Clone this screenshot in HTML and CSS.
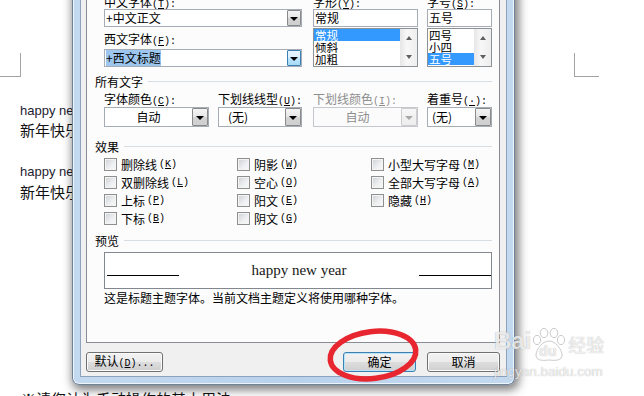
FILE: index.html
```html
<!DOCTYPE html>
<html lang="zh-CN">
<head>
<meta charset="utf-8">
<title>字体</title>
<link rel="stylesheet" href="styles.css">
</head>
<body>
<div class="doc">
  <div class="doc-left">
    <div class="corner corner-l"></div>
    <p class="en en-1">happy new year</p>
    <p class="zh zh-1">新年快乐</p>
    <p class="en en-2">happy new year</p>
    <p class="zh zh-2">新年快乐</p>
  </div>
  <div class="doc-right">
    <div class="corner corner-r"></div>
  </div>
</div>
<p class="doc-bottom">※请您认为手动操作的基本用法</p>

<div class="dialog">
  <div class="client">
    <div class="panel">
      <div class="top">
        <div class="col-a">
          <div class="lbl lbl-top">中文字体<span class="mn">(<u>T</u>):</span></div>
          <div class="combo"><span class="val">+中文正文</span><span class="dd"></span></div>
          <div class="lbl lbl-2">西文字体<span class="mn">(<u>F</u>):</span></div>
          <div class="combo"><span class="val"><span class="sel">+西文标题</span></span><span class="dd dd-hot"></span></div>
        </div>
        <div class="col-b">
          <div class="lbl lbl-top">字形<span class="mn">(<u>Y</u>):</span></div>
          <div class="field">常规</div>
          <div class="list">
            <div class="items">
              <div class="item on">常规</div>
              <div class="item">倾斜</div>
              <div class="item">加粗</div>
            </div>
            <div class="sb"><span class="sb-btn"><i class="up"></i></span><span class="sb-btn"><i class="dn"></i></span></div>
          </div>
        </div>
        <div class="col-c">
          <div class="lbl lbl-top">字号<span class="mn">(<u>S</u>):</span></div>
          <div class="field">五号</div>
          <div class="list">
            <div class="items">
              <div class="item">四号</div>
              <div class="item">小四</div>
              <div class="item on">五号</div>
            </div>
            <div class="sb"><span class="sb-btn"><i class="up"></i></span><span class="sb-btn"><i class="dn"></i></span></div>
          </div>
        </div>
      </div>

      <div class="sec sec-all">所有文字</div>
      <div class="row2 row2-lbl">
        <div class="c1">字体颜色<span class="mn">(<u>C</u>):</span></div>
        <div class="c2">下划线线型<span class="mn">(<u>U</u>):</span></div>
        <div class="c3 dis">下划线颜色<span class="mn">(<u>I</u>):</span></div>
        <div class="c4">着重号<span class="mn">(<u>·</u>):</span></div>
      </div>
      <div class="row2 row2-cb">
        <div class="c1 combo combo2"><span class="val center">自动</span><span class="dd"></span></div>
        <div class="c2 combo combo2"><span class="val pad9">(无)</span><span class="dd"></span></div>
        <div class="c3 combo combo2 combo-dis"><span class="val center">自动</span><span class="dd"></span></div>
        <div class="c4 combo combo2"><span class="val pad4">(无)</span><span class="dd"></span></div>
      </div>

      <div class="sec sec-fx">效果</div>
      <div class="checks">
        <label class="chk"><span class="box"></span>删除线<span class="mn">(<u>K</u>)</span></label>
        <label class="chk"><span class="box"></span>双删除线<span class="mn">(<u>L</u>)</span></label>
        <label class="chk"><span class="box"></span>上标<span class="mn">(<u>P</u>)</span></label>
        <label class="chk"><span class="box"></span>下标<span class="mn">(<u>B</u>)</span></label>
        <label class="chk"><span class="box"></span>阴影<span class="mn">(<u>W</u>)</span></label>
        <label class="chk"><span class="box"></span>空心<span class="mn">(<u>O</u>)</span></label>
        <label class="chk"><span class="box"></span>阳文<span class="mn">(<u>E</u>)</span></label>
        <label class="chk"><span class="box"></span>阴文<span class="mn">(<u>G</u>)</span></label>
        <label class="chk"><span class="box"></span>小型大写字母<span class="mn">(<u>M</u>)</span></label>
        <label class="chk"><span class="box"></span>全部大写字母<span class="mn">(<u>A</u>)</span></label>
        <label class="chk"><span class="box"></span>隐藏<span class="mn">(<u>H</u>)</span></label>
      </div>

      <div class="sec sec-pv">预览</div>
      <div class="preview">
        <span class="pv-line"></span>
        <span class="pv-text">happy new year</span>
        <span class="pv-line"></span>
      </div>
      <p class="desc">这是标题主题字体。当前文档主题定义将使用哪种字体。</p>
    </div>
    <div class="btns">
      <button class="btn btn-def">默认<span class="mn">(<u>D</u>)...</span></button>
      <button class="btn btn-ok">确定</button>
      <button class="btn btn-cancel">取消</button>
    </div>
  </div>
</div>

<svg class="mark" width="104" height="62" viewBox="0 0 104 62">
  <ellipse cx="51" cy="31" rx="43" ry="23.5" transform="rotate(-7 51 31)" fill="none" stroke="#e8262f" stroke-width="5.5"/>
</svg>

<div class="wm">
  <div class="wm-logo">
    <span class="wm-bai">Bai</span>
    <span class="wm-paw">
      <svg width="34" height="34" viewBox="0 0 34 34">
        <g fill="rgba(255,255,255,0.8)" stroke="rgba(140,140,140,0.45)" stroke-width="1">
          <ellipse cx="5" cy="12" rx="3.6" ry="4.6"/>
          <ellipse cx="12" cy="5" rx="3.8" ry="4.6"/>
          <ellipse cx="22" cy="5" rx="3.8" ry="4.6"/>
          <ellipse cx="29" cy="12" rx="3.6" ry="4.6"/>
          <path d="M17 13 C10 13 4 22 4 27 C4 32 9 33 17 32 C25 33 30 32 30 27 C30 22 24 13 17 13 Z" fill="none"/>
        </g>
      </svg>
      <span class="wm-du">du</span>
    </span>
    <span class="wm-jy">经验</span>
  </div>
  <div class="wm-url">jingyan.baidu.com</div>
</div>
</body>
</html>
```

FILE: styles.css
```css
* { box-sizing: border-box; margin: 0; padding: 0; }

html, body {
  width: 644px;
  height: 396px;
  overflow: hidden;
  background: #fff;
}

body {
  position: relative;
  font-family: "Noto Sans CJK SC", "Liberation Sans", sans-serif;
  font-size: 12px;
  color: #000;
}

/* ---------- document behind the dialog ---------- */
.doc {
  display: flex;
  justify-content: space-between;
  height: 390px;
}

.doc-left { width: 120px; }
.doc-right { width: 70px; }

.corner {
  height: 24px;
  margin-top: 53px;
  border-bottom: 1px solid #a3a3a3;
}
.corner-l { width: 21px; border-right: 1px solid #a3a3a3; }
.corner-r { width: 25px; border-left: 1px solid #a3a3a3; }

.en {
  font-family: "Liberation Sans", Arial, sans-serif;
  font-size: 13px;
  line-height: 16px;
  color: #1c1c30;
  white-space: nowrap;
  padding-left: 20px;
}
.en-1 { margin-top: 26px; }
.en-2 { margin-top: 25px; }

.zh {
  font-size: 15px;
  line-height: 18px;
  color: #111;
  white-space: nowrap;
  padding-left: 20px;
}
.zh-1 { margin-top: 2px; }
.zh-2 { margin-top: 3px; }

.doc-bottom {
  font-size: 15px;
  line-height: 18px;
  color: #111;
  padding-left: 21px;
  white-space: nowrap;
}

/* ---------- dialog window ---------- */
.dialog {
  position: absolute;
  left: 72px;
  top: -20px;
  width: 443px;
  height: 405px;
  z-index: 2;
  background: linear-gradient(to right, #c3d9ef, #b9d2ec 50%, #c3d9ef);
  border: 1px solid #6f8299;
  border-top: 0;
  border-radius: 0 0 7px 7px;
  padding: 0 7px 7px;
  box-shadow: 2px 3px 10px 2px rgba(0, 0, 0, 0.5), inset 0 0 0 1px rgba(255, 255, 255, 0.7);
}

.client {
  height: 397px;
  background: #f0f0f0;
  border: 1px solid #8ea3bb;
  border-top: 0;
  padding: 0 6px 0 5px;
  display: flex;
  flex-direction: column;
}

.panel {
  height: 363px;
  background: #fcfcfc;
  border: 1px solid #898c95;
  border-top: 0;
  padding: 11px 7px 0 17px;
}

.mn {
  font-family: "Liberation Mono", monospace;
  font-size: 10px;
}

/* top block */
.top {
  display: flex;
  height: 76px;
}
.col-a { width: 198px; }
.col-b { width: 105px; margin-left: 11px; }
.col-c { width: 65px; margin-left: 9px; }

.lbl { white-space: nowrap; }
.lbl-top { height: 18px; padding-top: 3px; line-height: 15px; }
.lbl-2 { height: 22px; line-height: 24px; }

.combo {
  height: 18px;
  border: 1px solid #a5acb5;
  background: #fff;
  display: flex;
  align-items: center;
}
.val {
  flex: 1;
  padding-left: 1px;
  line-height: 16px;
  white-space: nowrap;
  overflow: hidden;
}
.val.center { text-align: center; padding-left: 0; }
.val.pad9 { padding-left: 9px; }
.val.pad4 { padding-left: 4px; }

.sel { background: #9dc6ee; }

.dd {
  position: relative;
  width: 14px;
  height: 16px;
  border: 1px solid #8a8a8a;
  border-radius: 1px;
  background: linear-gradient(#f4f4f4, #e6e6e6 50%, #d4d4d4 51%, #cfcfcf);
}
.dd::after {
  content: "";
  position: absolute;
  left: 50%;
  top: 50%;
  margin: -1px 0 0 -4px;
  border-style: solid;
  border-width: 4px 4px 0 4px;
  border-color: #000 transparent transparent transparent;
}
.dd-hot {
  border-color: #3c7fb1;
  background: linear-gradient(#eaf6fd, #d9f0fc 50%, #bee6fd 51%, #a7d9f5);
}

.field {
  height: 18px;
  border: 1px solid #a5acb5;
  background: #fff;
  padding-left: 1px;
  line-height: 16px;
}

.list {
  height: 39px;
  margin-top: 1px;
  border: 1px solid #8d9297;
  background: #fff;
  display: flex;
}
.items { flex: 1; overflow: hidden; }
.item {
  height: 12px;
  font-size: 11.5px;
  line-height: 12px;
  padding-left: 1px;
  white-space: nowrap;
}
.item.on { background: #3399ff; color: #fff; }

.sb {
  width: 17px;
  display: flex;
  flex-direction: column;
  background: linear-gradient(to right, #e6e6e6, #f7f7f7 40%, #eeeeee);
}
.sb-btn {
  flex: 1;
  display: flex;
  align-items: center;
  justify-content: center;
}
.sb-btn i {
  width: 0;
  height: 0;
  border-style: solid;
}
.sb-btn .up { border-width: 0 3.5px 4px 3.5px; border-color: transparent transparent #5f5f5f transparent; }
.sb-btn .dn { border-width: 4px 3.5px 0 3.5px; border-color: #5f5f5f transparent transparent transparent; }

/* section headers */
.sec {
  display: flex;
  align-items: center;
  height: 18px;
  margin-left: -9px;
  white-space: nowrap;
}
.sec::after {
  content: "";
  flex: 1;
  height: 1px;
  margin-left: 5px;
  background: #d5dfe5;
}
.sec-all { margin-top: 5px; }
.sec-fx { margin-top: 10px; }
.sec-pv { margin-top: 4px; }

/* second row */
.row2 { display: flex; }
.row2 .c1 { width: 105px; }
.row2 .c2 { width: 84px; margin-left: 9px; }
.row2 .c3 { width: 105px; margin-left: 11px; }
.row2 .c4 { width: 65px; margin-left: 9px; }
.row2-lbl { height: 16px; line-height: 16px; margin-top: 1px; white-space: nowrap; }
.dis { color: #8d8d8d; }
.row2-cb { height: 20px; }
.combo2 { height: 20px; }
.combo2 .val { line-height: 18px; }
.combo2 .dd { width: 16px; height: 18px; }

.combo-dis { border-color: #c4c8cc; background: #fbfbfb; }
.combo-dis .val { color: #8d8d8d; }
.combo-dis .dd {
  border-color: #cdcdcd;
  background: linear-gradient(#f6f6f6, #ededed);
}
.combo-dis .dd::after { border-top-color: #a8a8a8; }

/* checkboxes */
.checks {
  display: grid;
  grid-template-columns: 133px 134px 1fr;
  grid-template-rows: repeat(4, 18px);
  grid-auto-flow: column;
}
.chk {
  display: flex;
  align-items: center;
  white-space: nowrap;
}
.chk .mn { margin-left: 2px; }
.box {
  width: 13px;
  height: 13px;
  margin-right: 4px;
  border: 1px solid #8e8f8f;
  background: linear-gradient(135deg, #cdd0d4, #eef0f2 60%, #f8f8f8);
  box-shadow: inset 0 0 0 1px #f4f4f4;
}

/* preview */
.preview {
  height: 37px;
  margin-top: 3px;
  border: 1px solid #828790;
  background: #fff;
  display: flex;
  align-items: flex-end;
  padding: 0 0 12px 2px;
}
.pv-line {
  width: 72px;
  height: 1px;
  background: #000;
}
.pv-text {
  flex: 1;
  text-align: center;
  font-family: "Liberation Serif", "Times New Roman", serif;
  font-size: 15px;
  line-height: 15px;
  margin-bottom: -2px;
  color: #161616;
}

.desc {
  height: 18px;
  line-height: 18px;
  white-space: nowrap;
}

/* buttons */
.btns {
  display: flex;
  height: 20px;
  margin-top: 9px;
}
.btn {
  height: 20px;
  font-family: "Noto Sans CJK SC", "Liberation Sans", sans-serif;
  font-size: 12px;
  line-height: 16px;
  color: #000;
  border: 1px solid #707070;
  border-radius: 3px;
  background: linear-gradient(#f2f2f2, #ebebeb 50%, #dddddd 51%, #cfcfcf);
  box-shadow: inset 0 0 0 1px #fbfbfb;
}
.btn-def { width: 77px; }
.btn-ok {
  width: 73px;
  margin-left: auto;
  border-color: #3c7fb1;
  box-shadow: inset 0 0 0 1px #b8e4fb;
}
.btn-cancel { width: 73px; margin-left: 11px; }

/* red hand-drawn mark */
.mark {
  position: absolute;
  left: 322px;
  top: 324px;
  z-index: 3;
}

/* watermark */
.wm {
  position: absolute;
  left: 494px;
  top: 326px;
  z-index: 4;
  color: rgba(255, 255, 255, 0.8);
  text-shadow: 0 0 1px rgba(0, 0, 0, 0.35);
  font-family: "Liberation Sans", Arial, sans-serif;
}
.wm-logo {
  display: flex;
  align-items: flex-end;
  height: 36px;
}
.wm-bai {
  font-size: 24px;
  font-weight: bold;
  line-height: 24px;
  margin-bottom: 9px;
}
.wm-paw {
  position: relative;
  width: 34px;
  height: 34px;
  margin-left: 1px;
}
.wm-paw svg { display: block; }
.wm-du {
  position: absolute;
  left: 7px;
  top: 15px;
  font-size: 14px;
  font-weight: bold;
  line-height: 16px;
}
.wm-jy {
  font-family: "Noto Sans CJK SC", sans-serif;
  font-size: 18px;
  line-height: 20px;
  margin: 0 0 8px 2px;
}
.wm-url {
  font-size: 13.5px;
  line-height: 16px;
  margin-top: 2px;
}
```
